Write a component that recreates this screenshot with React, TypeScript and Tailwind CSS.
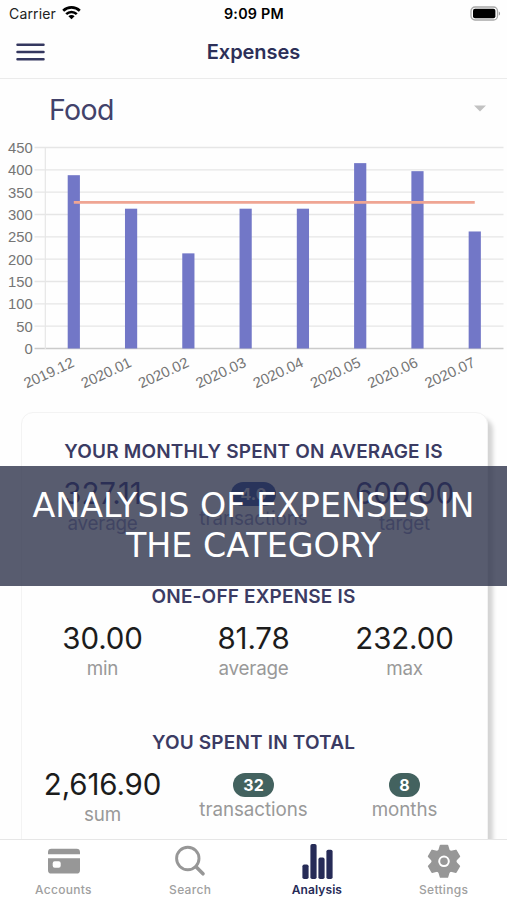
import type { ReactNode } from 'react'

const chartData = [
    { month: '2019.12', value: 388 },
    { month: '2020.01', value: 313 },
    { month: '2020.02', value: 213 },
    { month: '2020.03', value: 313 },
    { month: '2020.04', value: 313 },
    { month: '2020.05', value: 415 },
    { month: '2020.06', value: 397 },
    { month: '2020.07', value: 262 },
]

const ticks = [0, 50, 100, 150, 200, 250, 300, 350, 400, 450]
const average = 327.11

// y position inside the chart for a given amount
const yFor = (value: number) => 209.5 - (value * 201) / 450
const xFor = (index: number) => 73.8 + index * 57.28

function StatusBar() {
    return (
        <div className="flex h-[27px] shrink-0 items-center justify-between pl-[9px] pr-[6px] text-black">
            <div className="flex w-[120px] items-center gap-[6px]">
                <span className="text-[14px] tracking-[0.15px] leading-[27px] text-[#222]">Carrier</span>
                <svg width="19" height="15" viewBox="0 0 19 15" className="-mt-[2px]">
                    <path d="M1.2 5.8a12 12 0 0 1 16.6 0" fill="none" stroke="#000" strokeWidth="2.7" />
                    <path d="M4.2 9.1a7.6 7.6 0 0 1 10.6 0" fill="none" stroke="#000" strokeWidth="2.6" />
                    <path d="M9.5 14.3 6.4 11.2a4.4 4.4 0 0 1 6.2 0z" />
                </svg>
            </div>
            <span className="-ml-[2px] text-[14.3px] font-semibold tracking-[0.25px] leading-[27px]">9:09 PM</span>
            <div className="flex w-[120px] justify-end">
                <svg width="31" height="15" viewBox="0 0 31 15" className="-mt-px">
                    <rect x="1" y="1" width="26.5" height="13" rx="4" fill="#fff" stroke="#a8a8a8" strokeWidth="1.3" />
                    <rect x="3" y="2.8" width="22.4" height="9.4" rx="2" />
                    <path d="M28.8 5.4c1.7.6 1.7 3.6 0 4.2z" fill="#999" />
                </svg>
            </div>
        </div>
    )
}

function Header() {
    return (
        <header className="flex h-[52px] shrink-0 items-center justify-between border-b border-[#ebebeb] px-[16px] pb-[2px]">
            <button className="w-[29px]">
                <svg width="29" height="18" viewBox="0 0 29 18" className="block" stroke="#34375f" strokeWidth="2.5" strokeLinecap="round">
                    <path d="M1.5 1.7h26M1.5 9h26M1.5 16.3h26" />
                </svg>
            </button>
            <h1 className="text-[20px] font-semibold text-[#2c2f58] tracking-[-0.05px]">Expenses</h1>
            <div className="w-[29px]" />
        </header>
    )
}

function ExpensesChart() {
    return (
        <svg width="507" height="264" viewBox="0 0 507 264" className="block shrink-0" fontFamily="'Liberation Sans', Arial, sans-serif" fontSize="14.8" fill="#757575">
            {ticks.map((tick) => (
                <g key={tick}>
                    <line x1="34.5" x2="503.5" y1={yFor(tick)} y2={yFor(tick)} stroke={tick === 0 ? '#cbcbcb' : '#e6e6e6'} strokeWidth="1.3" />
                    <text x="32.7" y={yFor(tick) + 5.5} textAnchor="end">{tick}</text>
                </g>
            ))}
            <line x1="45.3" x2="45.3" y1="8.5" y2="210" stroke="#e6e6e6" strokeWidth="1.2" />
            {chartData.map((item, i) => (
                <g key={item.month}>
                    <rect x={xFor(i) - 6.1} y={yFor(item.value)} width="12.2" height={209.5 - yFor(item.value)} fill="#7277c7" />
                    <text textAnchor="end" transform={`translate(${xFor(i) + 1.5} 227) rotate(-25)`}>{item.month}</text>
                </g>
            ))}
            <line x1={xFor(0)} x2={xFor(7)} y1={yFor(average)} y2={yFor(average)} stroke="#efa593" strokeWidth="2.7" />
        </svg>
    )
}

// covered: sits under the caption banner and takes a blue tone
function Amount({ value, label, covered }: { value: string, label: string, covered?: boolean }) {
    return (
        <div className="flex flex-col items-center">
            <div className={`h-[34px] text-[29.5px] leading-[34px] tracking-[-0.15px] ${covered ? 'text-[#141474]' : 'text-[#1c1c1c]'}`}>{value}</div>
            <div className={`mt-[2px] text-[18.8px] leading-[24px] tracking-[-0.2px] ${covered ? 'text-[#8080bc]' : 'text-[#999]'}`}>{label}</div>
        </div>
    )
}

function Count({ value, label, covered }: { value: string, label: string, covered?: boolean }) {
    return (
        <div className="flex flex-col items-center pt-[6px]">
            <div className={`h-[24px] rounded-full px-[10px] text-[16px] font-bold leading-[24px] ${covered ? 'bg-[#0a2d96] text-[#d8d8f0]' : 'bg-[#43625f] text-white'}`}>{value}</div>
            <div className={`mt-[1px] text-[18.8px] leading-[24px] tracking-[-0.05px] ${covered ? 'text-[#8080bc]' : 'text-[#999]'}`}>{label}</div>
        </div>
    )
}

function Section({ title, children }: { title: string, children: ReactNode }) {
    return (
        <section className="h-[145.3px]">
            <h2 className="text-center text-[19px] font-semibold leading-[24px] tracking-[0.18px] text-[#3b3b63]">{title}</h2>
            <div className="mt-[12px] grid grid-cols-3">{children}</div>
        </section>
    )
}

function Tab({ label, active, children }: { label: string, active?: boolean, children: ReactNode }) {
    return (
        <button className="flex flex-1 flex-col items-center">
            <svg width="36" height="40" viewBox="0 0 36 40" fill={active ? '#262b57' : '#979797'}>
                {children}
            </svg>
            <span className={active ? 'text-[12px] leading-[20px] tracking-[0.1px] font-semibold text-[#262b57]' : 'text-[12px] leading-[20px] tracking-[0.3px] font-medium text-[#a0a0a0]'}>{label}</span>
        </button>
    )
}

function TabBar() {
    return (
        <nav className="flex h-[61px] shrink-0 border-t border-[#e6e6e6] bg-white">
            <Tab label="Accounts">
                <path d="M3 14.3v-2.1a3.4 3.4 0 0 1 3.4-3.4h25.2a3.4 3.4 0 0 1 3.4 3.4v2.1z" />
                <path fillRule="evenodd" d="M3 18.2h32v12a3.4 3.4 0 0 1-3.4 3.4H6.4a3.4 3.4 0 0 1-3.4-3.4zM9.7 21.3a2 2 0 0 0-2 2v2.5a2 2 0 0 0 2 2h4a2 2 0 0 0 2-2v-2.5a2 2 0 0 0-2-2z" />
            </Tab>
            <Tab label="Search">
                <circle cx="15.8" cy="18.5" r="11.2" fill="none" stroke="#979797" strokeWidth="2.9" />
                <path d="m24 26.8 7 7" stroke="#979797" strokeWidth="3.6" strokeLinecap="round" />
            </Tab>
            <Tab label="Analysis" active>
                <rect x="3.4" y="24.5" width="6.2" height="14.5" rx="1.8" />
                <rect x="11.4" y="4" width="6.2" height="35" rx="1.8" />
                <rect x="19.4" y="17.6" width="6.2" height="21.4" rx="1.8" />
                <rect x="27.4" y="9.7" width="6.2" height="29.3" rx="1.8" />
            </Tab>
            <Tab label="Settings">
                <g stroke="#979797" strokeLinejoin="round" strokeWidth="1.5">
                    <circle cx="18" cy="21.3" r="11.8" />
                    <path d="M12.8 11.3l1.7-5.8h7l1.7 5.8zM12.8 31.3l1.7 5.8h7l1.7-5.8z" />
                    <path d="M12.8 11.3l1.7-5.8h7l1.7 5.8zM12.8 31.3l1.7 5.8h7l1.7-5.8z" transform="rotate(60 18 21.3)" />
                    <path d="M12.8 11.3l1.7-5.8h7l1.7 5.8zM12.8 31.3l1.7 5.8h7l1.7-5.8z" transform="rotate(120 18 21.3)" />
                </g>
                <circle cx="18" cy="21.3" r="4.8" fill="none" stroke="#fff" strokeWidth="2" />
            </Tab>
        </nav>
    )
}

export default function App() {
    return (
        <div className="relative flex h-[900px] w-[507px] flex-col overflow-hidden bg-[#fefefe] font-['Inter','Liberation_Sans',sans-serif]">
            <StatusBar />
            <Header />

            <main className="flex min-h-0 flex-1 flex-col overflow-hidden">
                <div className="flex h-[60px] shrink-0 items-center justify-between pl-[49px] pr-[21px]">
                    <span className="pt-[2px] text-[28.5px] tracking-[-0.6px] text-[#42426a]">Food</span>
                    <svg width="12" height="7" viewBox="0 0 12 7" className="mt-[-1px]">
                        <path d="M0 .5h12L6 6.5z" fill="#c2c2c2" />
                    </svg>
                </div>

                <ExpensesChart />

                <div className="ml-[21px] mt-[9px] h-[520px] w-[467px] shrink-0 rounded-[12px] border border-[#f3f3f3] bg-[#fefefe] pl-[5px] pr-[7px] pt-[27px] shadow-[5px_6px_4px_rgba(0,0,0,0.17)]">
                    <Section title="YOUR MONTHLY SPENT ON AVERAGE IS">
                        <Amount value="327.11" label="average" covered />
                        <Count value="4.0" label="transactions" covered />
                        <Amount value="600.00" label="target" covered />
                    </Section>
                    <Section title="ONE-OFF EXPENSE IS">
                        <Amount value="30.00" label="min" />
                        <Amount value="81.78" label="average" />
                        <Amount value="232.00" label="max" />
                    </Section>
                    <Section title="YOU SPENT IN TOTAL">
                        <Amount value="2,616.90" label="sum" />
                        <Count value="32" label="transactions" />
                        <Count value="8" label="months" />
                    </Section>
                </div>
            </main>

            <TabBar />

            {/* caption banner over the page */}
            <div className="absolute left-0 top-[466px] h-[120px] w-full bg-[rgba(49,54,77,0.81)] pt-[20px] text-center font-['DejaVu_Sans',sans-serif] text-[33.3px] leading-[40px] text-white">
                ANALYSIS OF EXPENSES IN
                <br />
                THE CATEGORY
            </div>
        </div>
    )
}
